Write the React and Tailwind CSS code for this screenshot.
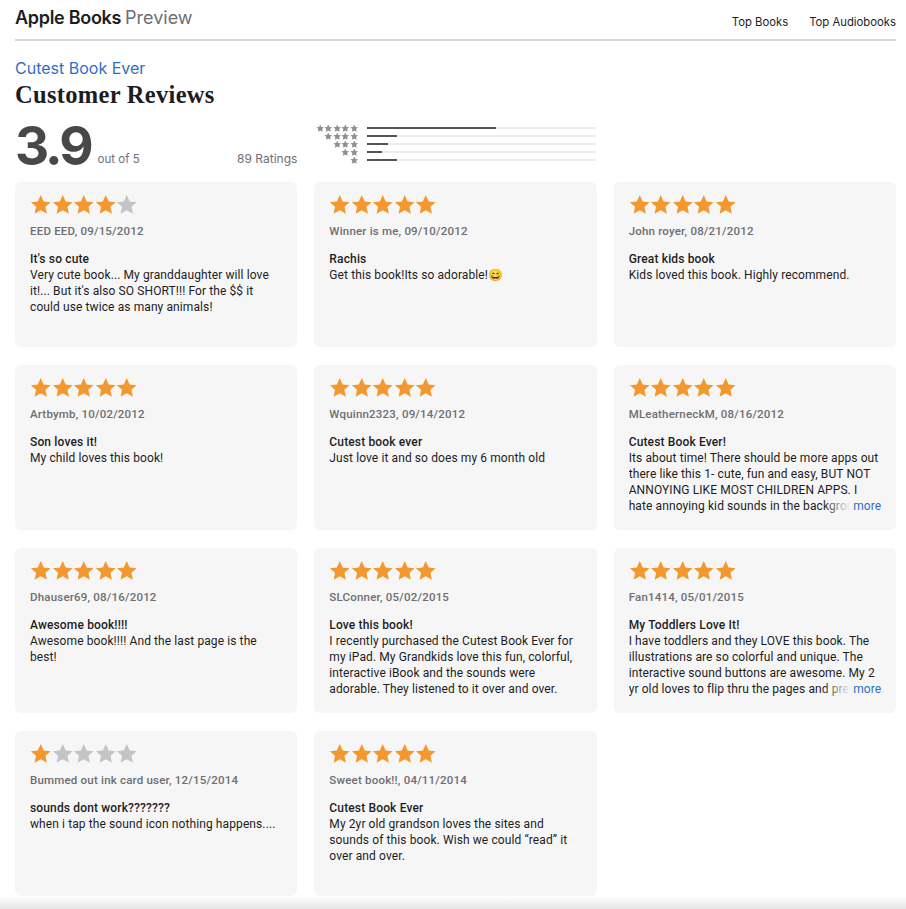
import React from 'react'

const reviews = [
  { stars: 4, author: 'EED EED, 09/15/2012', title: "It's so cute", body: "Very cute book... My granddaughter will love it!... But it's also SO SHORT!!! For the $$ it could use twice as many animals!" },
  { stars: 5, author: 'Winner is me, 09/10/2012', title: 'Rachis', body: 'Get this book!Its so adorable!😄' },
  { stars: 5, author: 'John royer, 08/21/2012', title: 'Great kids book', body: 'Kids loved this book. Highly recommend.' },
  { stars: 5, author: 'Artbymb, 10/02/2012', title: 'Son loves it!', body: 'My child loves this book!' },
  { stars: 5, author: 'Wquinn2323, 09/14/2012', title: 'Cutest book ever', body: 'Just love it and so does my 6 month old' },
  { stars: 5, author: 'MLeatherneckM, 08/16/2012', title: 'Cutest Book Ever!', body: 'Its about time! There should be more apps out there like this 1- cute, fun and easy, BUT NOT ANNOYING LIKE MOST CHILDREN APPS. I hate annoying kid sounds in the background and I love that you can turn them off.', more: true },
  { stars: 5, author: 'Dhauser69, 08/16/2012', title: 'Awesome book!!!!', body: 'Awesome book!!!! And the last page is the best!' },
  { stars: 5, author: 'SLConner, 05/02/2015', title: 'Love this book!', body: 'I recently purchased the Cutest Book Ever for my iPad. My Grandkids love this fun, colorful, interactive iBook and the sounds were adorable. They listened to it over and over.' },
  { stars: 5, author: 'Fan1414, 05/01/2015', title: 'My Toddlers Love It!', body: 'I have toddlers and they LOVE this book. The illustrations are so colorful and unique. The interactive sound buttons are awesome. My 2 yr old loves to flip thru the pages and press the buttons.', more: true },
  { stars: 1, author: 'Bummed out ink card user, 12/15/2014', title: 'sounds dont work???????', body: 'when i tap the sound icon nothing happens....' },
  { stars: 5, author: 'Sweet book!!, 04/11/2014', title: 'Cutest Book Ever', body: 'My 2yr old grandson loves the sites and sounds of this book. Wish we could “read” it over and over.' },
]

const histogram = [
  { n: 5, pct: 56 },
  { n: 4, pct: 13 },
  { n: 3, pct: 9 },
  { n: 2, pct: 6.5 },
  { n: 1, pct: 13 },
]

function Star({ size = 21, className }) {
  return (
    <svg width={size} height={size} viewBox="0 0 24 24" className={className}>
      <path d="M12 1.2l3.27 7.05 7.73.86-5.73 5.26 1.57 7.63L12 18.17 5.16 22l1.57-7.63L1 9.11l7.73-.86z" fill="currentColor" />
    </svg>
  )
}

function StarRow({ count }) {
  return (
    <div className="flex">
      {[0, 1, 2, 3, 4].map(i => (
        <Star key={i} size={21.5} className={i < count ? 'text-[#f3982f]' : 'text-[#c4c4c6]'} />
      ))}
    </div>
  )
}

function ReviewCard({ r }) {
  return (
    <div className="bg-[#f6f6f6] rounded-md h-[165px] px-[15px] pt-[12px] overflow-hidden" style={{ fontFamily: 'Roboto, "Liberation Sans", sans-serif' }}>
      <StarRow count={r.stars} />
      <div className="text-[11.5px] font-medium text-[#6e6e73] mt-[7px] leading-4 tracking-[0.2px]">{r.author}</div>
      <div className="text-[12px] font-medium text-[#1d1d1f] mt-[12px] leading-4 tracking-[0.15px]">{r.title}</div>
      <div className="relative">
        <p className="text-[12px] text-[#1d1d1f] leading-4 max-h-16 overflow-hidden tracking-[0.1px]">{r.body}</p>
        {r.more && (
          <div className="absolute right-0 bottom-0 flex h-4">
            <div className="w-[28px] bg-gradient-to-r from-transparent to-[#f6f6f6]" />
            <span className="bg-[#f6f6f6] text-[12px] leading-4 text-[#2f6fc7] pl-[2px]">more</span>
          </div>
        )}
      </div>
    </div>
  )
}

export default function App() {
  return (
    <div className="min-h-screen bg-white text-[#1d1d1f]" style={{ fontFamily: 'Inter, "Liberation Sans", sans-serif' }}>
      <div className="pl-[15px] pr-[10px]">

        {/* Header */}
        <div className="flex items-center justify-between h-[41px] border-b-2 border-[#d6d6d6]">
          <div className="text-[18px] leading-none pb-[3px]">
            <span className="font-semibold tracking-[-0.3px]">Apple Books</span>
            <span className="text-[#6e6e73] ml-[4px]">Preview</span>
          </div>
          <div className="flex gap-[21px] text-[11.3px] text-[#1d1d1f] pt-[5px]">
            <span>Top Books</span>
            <span>Top Audiobooks</span>
          </div>
        </div>

        {/* Title */}
        <div className="text-[16px] text-[#2f6fc7] mt-[17px] leading-5">Cutest Book Ever</div>
        <h1 className="text-[24.5px] font-bold leading-7 mt-[3px] tracking-[0.3px]" style={{ fontFamily: '"Liberation Serif", serif' }}>Customer Reviews</h1>

        {/* Ratings summary */}
        <div className="grid grid-cols-3 gap-x-[17px] mt-[6px]">
          <div className="flex items-end justify-between h-[54px]">
            <div className="flex items-end">
              <span className="text-[53px] font-bold leading-none text-[#48484a] tracking-[-3px] -mb-[4px]">3.9</span>
              <span className="text-[11.5px] text-[#6e6e73] ml-[7px] mb-[1px]">out of 5</span>
            </div>
            <span className="text-[12px] text-[#6e6e73] mb-[1px]">89 Ratings</span>
          </div>
          <div className="flex flex-col pt-[9px]">
            {histogram.map(h => (
              <div key={h.n} className="flex items-center h-[8px]">
                <div className="w-[44px] flex justify-end">
                  {Array.from({ length: h.n }).map((_, i) => (
                    <Star key={i} size={8.5} className="text-[#8e8e93]" />
                  ))}
                </div>
                <div className="ml-[9px] w-[229px] h-[2.5px] bg-[#ececf0] relative">
                  <div className="absolute left-0 top-0 h-full bg-[#555558]" style={{ width: `${h.pct}%` }} />
                </div>
              </div>
            ))}
          </div>
        </div>

        {/* Reviews */}
        <div className="grid grid-cols-3 gap-x-[17px] gap-y-[18px] mt-[13px]">
          {reviews.map((r, i) => <ReviewCard key={i} r={r} />)}
        </div>
      </div>

      <div className="fixed left-0 right-0 bottom-0 h-[14px] bg-gradient-to-b from-transparent to-[#e6e6e6] pointer-events-none" />
    </div>
  )
}
